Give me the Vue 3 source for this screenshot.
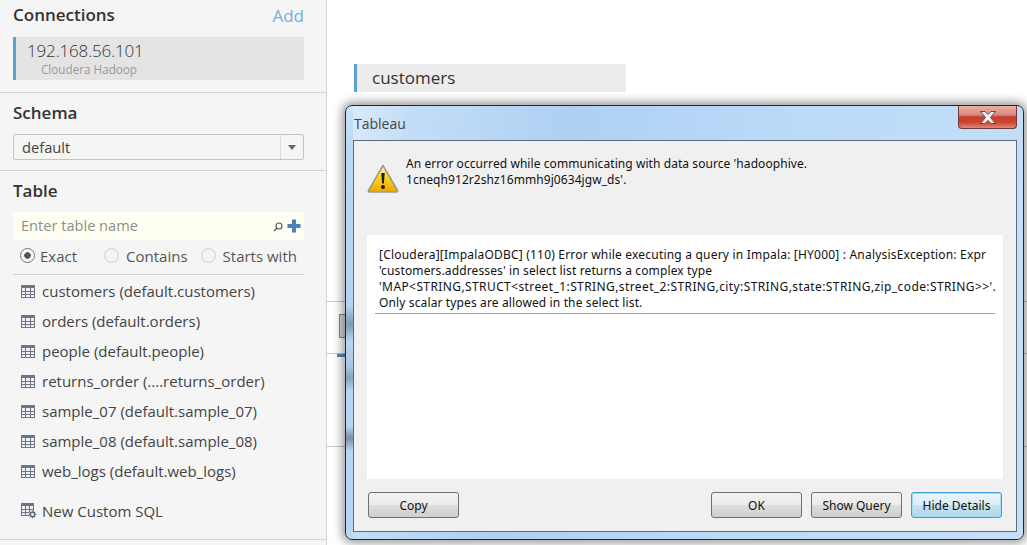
<script setup>
const tables = [
  'customers (default.customers)',
  'orders (default.orders)',
  'people (default.people)',
  'returns_order (....returns_order)',
  'sample_07 (default.sample_07)',
  'sample_08 (default.sample_08)',
  'web_logs (default.web_logs)'
]
const radios = [
  { label: 'Exact', on: true, cls: 'r1' },
  { label: 'Contains', on: false, cls: 'r2' },
  { label: 'Starts with', on: false, cls: 'r3' }
]
const detailLines = [
  { text: '[Cloudera][ImpalaODBC] (110) Error while executing a query in Impala: [HY000] : AnalysisException: Expr', cls: 'l1' },
  { text: "'customers.addresses' in select list returns a complex type", cls: 'l2' },
  { text: "'MAP<STRING,STRUCT<street_1:STRING,street_2:STRING,city:STRING,state:STRING,zip_code:STRING>>'.", cls: 'l3' },
  { text: 'Only scalar types are allowed in the select list.', cls: 'l2' }
]
</script>

<template>
  <div class="page">
    <aside class="side">
      <section class="conn">
        <div class="head"><h2>Connections</h2><span class="add">Add</span></div>
        <div class="card">
          <div class="ip">192.168.56.101</div>
          <div class="kind">Cloudera Hadoop</div>
        </div>
      </section>
      <section class="schema">
        <h2>Schema</h2>
        <div class="combo">
          <span class="val">default</span>
          <span class="arrow"><i></i></span>
        </div>
      </section>
      <section class="table">
        <h2>Table</h2>
        <div class="search">
          <span class="ph">Enter table name</span>
          <svg class="mag" width="10" height="10" viewBox="0 0 10 10"><circle cx="6" cy="4" r="3" fill="none" stroke="#555" stroke-width="1.1"/><path d="M3.8 6.2 1 9" stroke="#555" stroke-width="1.3" fill="none"/></svg>
          <svg class="plus" width="14" height="14" viewBox="0 0 14 14"><path d="M5 0.5h4v4.5h4.5v4H9v4.5H5V9H0.5V5H5z" fill="#4f7fbb"/></svg>
        </div>
        <div class="radios">
          <label v-for="r in radios" :key="r.label" :class="['radio', r.cls]">
            <span :class="['dot', { on: r.on }]"></span>{{ r.label }}
          </label>
        </div>
        <ul class="list">
          <li v-for="t in tables" :key="t">
            <svg width="14" height="13" viewBox="0 0 14 13"><rect x="0.5" y="0.5" width="13" height="12" fill="#eef0f3" stroke="#6c7686"/><rect x="0" y="0" width="14" height="3" fill="#6c7686"/><path d="M0 6.5h14M0 9.5h14M4.5 3v10M9.5 3v10" stroke="#6c7686" stroke-width="1" fill="none"/></svg>
            <span>{{ t }}</span>
          </li>
        </ul>
        <div class="sql">
          <svg width="16" height="16" viewBox="0 0 16 16"><rect x="0.5" y="0.5" width="12" height="12" fill="#eef0f3" stroke="#6c7686"/><rect x="0" y="0" width="13" height="3" fill="#6c7686"/><path d="M0 6.5h13M0 9.5h13M4.5 3v10M8.5 3v10" stroke="#6c7686" fill="none"/><circle cx="11.5" cy="11.5" r="3.4" fill="#f5f5f5"/><circle cx="11.5" cy="11.5" r="2.2" fill="none" stroke="#5f6b7a" stroke-width="1.5"/><path d="M11.5 7.7v1.6M11.5 13.7v1.6M7.7 11.5h1.6M13.7 11.5h1.6M8.9 8.9l1 1M13.1 13.1l1 1M14.1 8.9l-1 1M9.9 13.1l-1 1" stroke="#5f6b7a" stroke-width="1.2"/></svg>
          <span>New Custom SQL</span>
        </div>
      </section>
    </aside>

    <main class="canvas">
      <div class="pill">customers</div>
      <div class="behind">
        <div class="grey"></div>
      </div>
      <div class="behind2"><div class="tab"></div></div>
    </main>

    <div class="dialog">
      <div class="titlebar">
        <span class="title">Tableau</span>
        <div class="close">
          <svg width="20" height="13" viewBox="0 0 20 13"><path d="M2.5 0.5h4.5l3 3 3-3h4.500l-5 6 5 6h-4.500l-3-3-3 3h-4.500l5-6z" fill="#f2f2f4" stroke="#5a3a3e" stroke-width="0.9"/></svg>
        </div>
      </div>
      <div class="content">
        <div class="msg">
          <svg class="warn" width="32" height="29" viewBox="0 0 32 29">
            <defs><linearGradient id="wg" x1="0" y1="0" x2="0" y2="1"><stop offset="0" stop-color="#fff3b0"/><stop offset="0.5" stop-color="#fcd116"/><stop offset="1" stop-color="#eda600"/></linearGradient></defs>
            <path d="M16 1.500 30.500 26.500a1 1 0 0 1-1 1.500H2.500a1 1 0 0 1-1-1.500z" fill="url(#wg)" stroke="#9a9a92" stroke-width="1.500" stroke-linejoin="round"/>
            <path d="M14.300 9h3.400l-.8 10.500h-1.800z" fill="#1c1a12"/><circle cx="16" cy="23" r="2" fill="#1c1a12"/>
          </svg>
          <p>An error occurred while communicating with data source 'hadoophive.<br>1cneqh912r2shz16mmh9j0634jgw_ds'.</p>
        </div>
        <div class="detail">
          <p v-for="l in detailLines" :key="l.text" :class="l.cls">{{ l.text }}</p>
          <div class="rule"></div>
        </div>
        <div class="buttons">
          <button class="btn">Copy</button>
          <span class="grow"></span>
          <button class="btn">OK</button>
          <button class="btn">Show Query</button>
          <button class="btn focus">Hide Details</button>
        </div>
      </div>
    </div>
  </div>
</template>

<style>
html, body { margin: 0; background: #fff; overflow: hidden; }
</style>

<style scoped>
.page { position: relative; display: flex; width: 1027px; height: 545px; overflow: hidden; font-family: "Open Sans", sans-serif; color: #333; }
h2 { margin: 0; font-size: 17px; line-height: 20px; font-weight: 600; color: #333; }
.side { width: 326px; height: 545px; background: #f5f5f5; border-right: 1px solid #d4d4d4; flex: none; box-sizing: content-box; }
section { padding: 0 22px 0 13px; border-bottom: 1px solid #d4d4d4; }
.conn { height: 93px; box-sizing: border-box; padding-top: 5px; }
.head { display: flex; justify-content: space-between; align-items: center; height: 20px; }
.add { font-size: 17px; color: #6fb2d6; font-weight: 400; }
.card { margin-top: 12px; height: 43px; background: #e4e4e4; border-left: 3px solid #5ba3cf; box-sizing: border-box; padding-left: 11px; }
.ip { font-size: 17px; line-height: 24px; letter-spacing: -0.16px; color: #333; font-weight: 300; padding-top: 2px; }
.kind { font-size: 11.700px; line-height: 14px; color: #999; padding-left: 14px; margin-top: -1px; }
.schema { height: 78px; box-sizing: border-box; padding-top: 10px; }
.combo { margin-top: 11px; height: 26px; box-sizing: border-box; border: 1px solid #c4c4c4; border-radius: 2px; display: flex; align-items: center; background: #f5f5f5; }
.val { flex: 1; padding-left: 8px; font-size: 14.700px; color: #444; }
.arrow { width: 22px; height: 24px; border-left: 1px solid #dcdcdc; display: flex; align-items: center; justify-content: center; }
.arrow i { width: 0; height: 0; border: 4px solid transparent; border-top: 5px solid #666; border-bottom: 0; }
.table { height: 369px; box-sizing: border-box; padding-top: 10px; }
.search { margin-top: 11px; height: 28px; box-sizing: border-box; background: #fefef2; display: flex; align-items: center; padding: 0 3px 0 8px; }
.ph { flex: 1; font-size: 14.600px; color: #8f8f86; margin-top: -2px; }
.mag { margin-right: 4px; margin-top: 1px; }
.radios { display: flex; height: 35px; align-items: center; border-bottom: 1px solid #d0d0d0; padding-left: 7px; font-size: 15px; color: #555; padding-bottom: 3px; box-sizing: border-box; }
.radio { display: flex; align-items: center; gap: 7px; }
.r1 { gap: 5px; }
.r2 { margin-left: 27px; }
.r3 { margin-left: 13px; }
.dot { width: 15px; height: 15px; box-sizing: border-box; border: 1px solid #d2d2d2; border-radius: 50%; background: #f3f3f3; display: inline-block; position: relative; }
.dot.on { border-color: #777; background: radial-gradient(circle, #555 0 3px, #f6f6f6 3.500px); }
.list { margin: 0; padding: 1px 0 0 8px; list-style: none; }
.list li { height: 30px; display: flex; align-items: center; gap: 7px; font-size: 15px; color: #444; }
.sql { margin-top: 10px; padding-left: 8px; height: 30px; display: flex; align-items: center; gap: 5px; font-size: 15px; color: #444; }
.canvas { flex: 1; background: #fff; min-width: 0; }
.pill { margin: 64px 0 0 27px; width: 272px; height: 28px; box-sizing: border-box; background: #ececec; border-left: 3px solid #5ba3cf; padding-left: 15px; font-size: 17px; line-height: 28px; color: #333; }
.behind { margin-top: 209px; height: 51px; border-top: 1px solid #c8c8c8; box-sizing: content-box; }
.grey { margin: 12px 0 0 12px; width: 20px; height: 24px; box-sizing: border-box; background: #d8d8d8; border: 1px solid #888; }
.behind2 { height: 92px; border-top: 1px solid #c8c8c8; border-bottom: 1px solid #c8c8c8; }
.tab { margin-left: 10px; width: 12px; height: 3px; background: #4f8db5; }
.dialog { position: absolute; left: 345px; top: 105px; width: 679px; height: 435px; box-sizing: border-box; border: 1px solid #24282d; border-radius: 7px; padding: 0 6px 7px 7px; display: flex; flex-direction: column;
  background:
    linear-gradient(180deg, #cde2f8 0, #b9d8f5 40px, #b4d3f2 200px, #7d9ab6 218px, #b6d6f5 235px, #a9c7e4 260px, #85a4c0 272px, #b6d6f5 285px, #b6d6f5 320px, #7a8fa3 332px, #b6d6f5 345px) 0 0 / 7px 100% no-repeat,
    linear-gradient(100deg, #dcebf9 0, #c3ddf7 9%, #aed0f3 30%, #badaf8 60%, #c6dff8 100%);
  box-shadow: 0 0 10px 3px rgba(0, 0, 0, 0.4); }
.titlebar { height: 34px; flex: none; display: flex; justify-content: space-between; align-items: flex-start; }
.title { font-size: 14px; line-height: 36px; color: #444; font-family: "Open Sans", sans-serif; margin-left: 1px; }
.close { width: 59px; height: 23px; box-sizing: border-box; margin-right: 0; border: 1px solid #6b3a3a; border-top: 0; border-radius: 0 0 4px 4px; display: flex; align-items: center; justify-content: center;
  background: linear-gradient(180deg, #e8b0a8 0, #d98a80 40%, #c8402a 50%, #cc4530 75%, #e08a78 100%); }
.content { flex: 1; background: #f0f0f0; border: 1px solid #5c6b7a; display: flex; flex-direction: column; padding: 0 13px; font-family: "Noto Sans", sans-serif; font-size: 12px; color: #111; }
.msg { height: 94px; box-sizing: border-box; position: relative; padding: 15px 0 0 39px; flex: none; }
.msg p { margin: 0; line-height: 16px; letter-spacing: 0.07px; }
.warn { position: absolute; left: 0; top: 23px; }
.detail { height: 244px; flex: none; background: #fff; padding: 12px 8px 0 12px; box-sizing: border-box; }
.detail p { margin: 0; line-height: 16px; white-space: nowrap; }
.l1 { letter-spacing: 0.2px; }
.l2 { letter-spacing: 0.13px; }
.l3 { letter-spacing: 0.4px; }
.rule { margin: 2px 0 0 -4px; height: 1px; background: #a0a0a0; }
.buttons { display: flex; gap: 9px; margin-top: 13px; padding-left: 1px; padding-right: 1px; }
.grow { flex: 1; }
.btn { width: 91px; height: 26px; box-sizing: border-box; border: 1px solid #707070; border-radius: 3px; background: linear-gradient(180deg, #f2f2f2 0, #ebebeb 48%, #dddddd 52%, #cfcfcf 100%); font-family: "Noto Sans", sans-serif; font-size: 12px; color: #111; padding: 0; }
.btn.focus { border-color: #3c9fd8; background: linear-gradient(180deg, #eaf6fc 0, #dcedf6 48%, #c6e2ef 52%, #b4d6e6 100%); box-shadow: inset 0 0 0 1px #9fdcf5; }
</style>
